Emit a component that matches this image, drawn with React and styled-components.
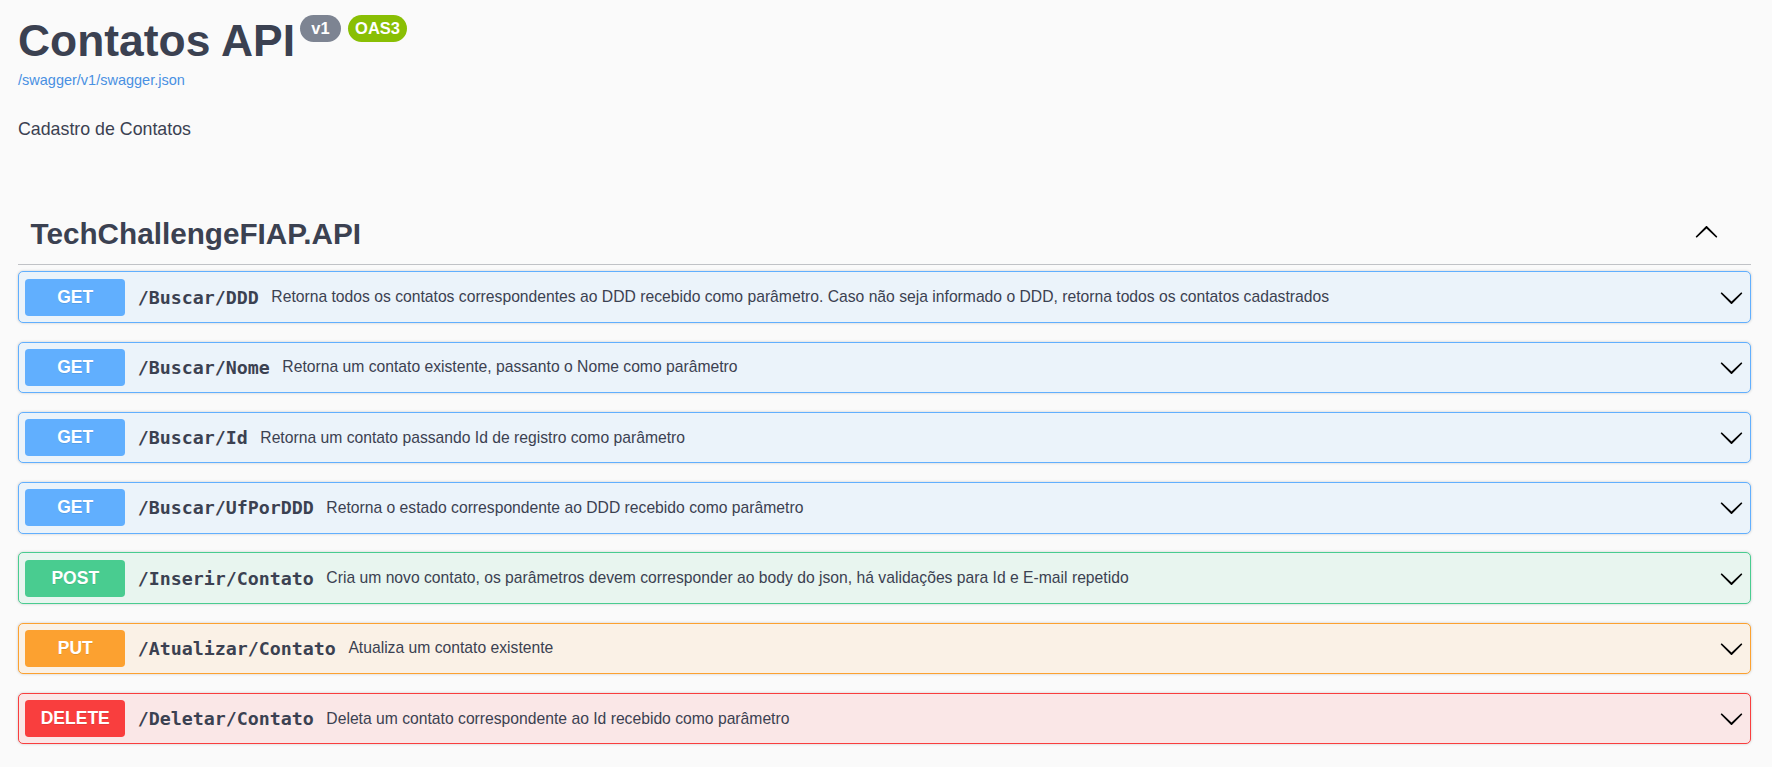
import React from "react";
import styled, { createGlobalStyle } from "styled-components";

const GlobalStyle = createGlobalStyle`
  html, body {
    margin: 0;
    padding: 0;
    background: #fafafa;
    font-family: "Liberation Sans", Arial, sans-serif;
    color: #3b4151;
  }
`;

const Page = styled.div`
  padding: 15px 21px 20px 18px;
`;

const Info = styled.div`
  display: flex;
  flex-direction: column;
`;

const Title = styled.h2`
  display: flex;
  align-items: flex-start;
  margin: 0;
  font-size: 44.4px;
  line-height: 52px;
  font-weight: 700;
  color: #3b4151;
`;

const Badge = styled.small`
  display: inline-block;
  box-sizing: border-box;
  min-width: ${(p) => p.$w}px;
  height: 27px;
  line-height: 27px;
  margin-left: ${(p) => (p.$first ? 5 : 7)}px;
  padding: 0 7px;
  border-radius: 14px;
  background: ${(p) => p.$bg};
  color: #fff;
  font-size: 16.5px;
  font-weight: 700;
  text-align: center;
`;

const BaseUrl = styled.a`
  margin-top: 5px;
  font-size: 14.5px;
  line-height: 17px;
  color: #4990e2;
  text-decoration: none;
`;

const Description = styled.p`
  margin: 30px 0 0;
  font-size: 17.8px;
  line-height: 20px;
`;

const TagSection = styled.section`
  margin-top: 65px;
`;

const TagHeader = styled.h3`
  display: flex;
  align-items: center;
  justify-content: space-between;
  margin: 0 0 6.25px;
  padding: 12.5px 32px 13.5px 12.5px;
  border-bottom: 1px solid rgba(59, 65, 81, 0.3);
  font-size: 29.7px;
  line-height: 34px;
  font-weight: 700;
  color: #3b4151;
`;

const ArrowButton = styled.button`
  display: flex;
  padding: 0;
  border: none;
  background: none;
  color: #000;
  margin-top: -3px;
`;

const OpBlock = styled.div`
  display: flex;
  align-items: center;
  padding: 6.25px;
  margin-bottom: 18.75px;
  border: 1px solid ${(p) => p.$color};
  border-radius: 5px;
  background: ${(p) => p.$bg};
  box-shadow: 0 0 3px rgba(0, 0, 0, 0.19);
`;

const Method = styled.span`
  display: flex;
  align-items: center;
  justify-content: center;
  min-width: 100px;
  height: 37px;
  border-radius: 3.75px;
  background: ${(p) => p.$color};
  color: #fff;
  font-size: 17.5px;
  font-weight: 700;
  text-shadow: 0 1px 0 rgba(0, 0, 0, 0.1);
`;

const Path = styled.span`
  padding: 0 12.5px;
  font-family: "DejaVu Sans Mono", "Liberation Mono", monospace;
  font-size: 18.3px;
  font-weight: 700;
  color: #3b4151;
`;

const Summary = styled.span`
  flex: 1;
  font-size: 15.7px;
  color: #3b4151;
`;

const Chevron = styled.svg`
  width: 25px;
  height: 25px;
  flex-shrink: 0;
  fill: currentColor;
  color: #000;
  transform: ${(p) => (p.$up ? "rotate(180deg)" : "none")};
`;

const methods = {
  GET: { color: "#61affe", bg: "#ebf3fa" },
  POST: { color: "#49cc90", bg: "#e8f5ef" },
  PUT: { color: "#fca130", bg: "#faf1e6" },
  DELETE: { color: "#f93e3e", bg: "#fae7e7" },
};

const operations = [
  { method: "GET", path: "/Buscar/DDD", summary: "Retorna todos os contatos correspondentes ao DDD recebido como parâmetro. Caso não seja informado o DDD, retorna todos os contatos cadastrados" },
  { method: "GET", path: "/Buscar/Nome", summary: "Retorna um contato existente, passanto o Nome como parâmetro" },
  { method: "GET", path: "/Buscar/Id", summary: "Retorna um contato passando Id de registro como parâmetro" },
  { method: "GET", path: "/Buscar/UfPorDDD", summary: "Retorna o estado correspondente ao DDD recebido como parâmetro" },
  { method: "POST", path: "/Inserir/Contato", summary: "Cria um novo contato, os parâmetros devem corresponder ao body do json, há validações para Id e E-mail repetido" },
  { method: "PUT", path: "/Atualizar/Contato", summary: "Atualiza um contato existente" },
  { method: "DELETE", path: "/Deletar/Contato", summary: "Deleta um contato correspondente ao Id recebido como parâmetro" },
];

function Arrow({ up }) {
  return (
    <Chevron $up={up} viewBox="0 0 20 20" aria-hidden="true">
      <path d="M17.418 6.109c.272-.268.709-.268.979 0s.271.701 0 .969l-7.908 7.83c-.27.268-.707.268-.979 0l-7.908-7.83c-.27-.268-.27-.701 0-.969.271-.268.709-.268.979 0L10 13.25l7.418-7.141z" />
    </Chevron>
  );
}

export default function App() {
  return (
    <>
      <GlobalStyle />
      <Page>
        <Info>
          <Title>
            Contatos API
            <Badge $first $w={41} $bg="#7d8492">v1</Badge>
            <Badge $w={59} $bg="#89bf04">OAS3</Badge>
          </Title>
          <BaseUrl href="#">/swagger/v1/swagger.json</BaseUrl>
          <Description>Cadastro de Contatos</Description>
        </Info>

        <TagSection>
          <TagHeader>
            <span>TechChallengeFIAP.API</span>
            <ArrowButton>
              <Arrow up />
            </ArrowButton>
          </TagHeader>
          {operations.map((op) => (
            <OpBlock key={op.path} $color={methods[op.method].color} $bg={methods[op.method].bg}>
              <Method $color={methods[op.method].color}>{op.method}</Method>
              <Path>{op.path}</Path>
              <Summary>{op.summary}</Summary>
              <Arrow />
            </OpBlock>
          ))}
        </TagSection>
      </Page>
    </>
  );
}
